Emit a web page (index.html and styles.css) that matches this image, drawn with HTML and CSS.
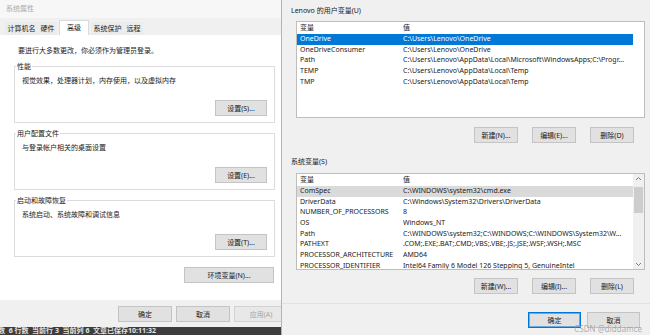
FILE: index.html
```html
<!DOCTYPE html>
<html lang="zh-CN">
<head>
    <meta charset="UTF-8">
    <meta name="viewport" content="width=device-width, initial-scale=1.0">
    <title>系统属性 - 环境变量</title>
    <link rel="stylesheet" href="styles.css">
</head>
<body>
    <div class="desk">
        <!-- System properties window -->
        <section class="sysprops">
            <div class="titlebar">系统属性</div>
            <div class="tabs">
                <span class="tab">计算机名</span>
                <span class="tab">硬件</span>
                <span class="tab active">高级</span>
                <span class="tab">系统保护</span>
                <span class="tab">远程</span>
            </div>
            <div class="panel">
                <p class="intro">要进行大多数更改，你必须作为管理员登录。</p>
                <div class="group">
                    <span class="group-title">性能</span>
                    <p class="group-text">视觉效果，处理器计划，内存使用，以及虚拟内存</p>
                    <div class="group-actions"><button class="btn">设置(S)...</button></div>
                </div>
                <div class="group">
                    <span class="group-title">用户配置文件</span>
                    <p class="group-text">与登录帐户相关的桌面设置</p>
                    <div class="group-actions"><button class="btn">设置(E)...</button></div>
                </div>
                <div class="group">
                    <span class="group-title">启动和故障恢复</span>
                    <p class="group-text">系统启动、系统故障和调试信息</p>
                    <div class="group-actions"><button class="btn">设置(T)...</button></div>
                </div>
                <div class="env-row"><button class="btn btn-wide">环境变量(N)...</button></div>
            </div>
            <div class="footer">
                <button class="btn">确定</button>
                <button class="btn">取消</button>
                <button class="btn" disabled>应用(A)</button>
            </div>
            <div class="statusbar">数&nbsp;&nbsp;6 行数&nbsp;&nbsp;当前行 3&nbsp;&nbsp;当前列 6&nbsp;&nbsp;文章已保存10:11:32</div>
        </section>

        <!-- Environment variables window -->
        <section class="envvars">
            <div class="section-label">Lenovo 的用户变量(U)</div>
            <div class="list">
                <div class="list-body" id="userVars"></div>
            </div>
            <div class="actions">
                <button class="btn">新建(N)...</button>
                <button class="btn">编辑(E)...</button>
                <button class="btn">删除(D)</button>
            </div>

            <div class="section-label sys">系统变量(S)</div>
            <div class="list sys">
                <div class="list-body" id="sysVars"></div>
                <div class="scrollbar">
                    <svg class="sb-arrow" width="7" height="8" viewBox="0 0 7 8"><polyline points="1,5 3.5,2.5 6,5" fill="none" stroke="#6d6d6d" stroke-width="0.9"/></svg>
                    <div class="sb-thumb"></div>
                    <svg class="sb-arrow down" width="7" height="8" viewBox="0 0 7 8"><polyline points="1,3 3.5,5.5 6,3" fill="none" stroke="#6d6d6d" stroke-width="0.9"/></svg>
                </div>
            </div>
            <div class="actions sys">
                <button class="btn">新建(W)...</button>
                <button class="btn">编辑(I)...</button>
                <button class="btn">删除(L)</button>
            </div>

            <div class="separator"></div>
            <div class="dialog-buttons">
                <button class="btn btn-dialog default">确定</button>
                <button class="btn btn-dialog">取消</button>
            </div>
            <div class="watermark">CSDN @diddamce</div>
        </section>
    </div>

    <script>
const userVars = [
    ["OneDrive", "C:\\Users\\Lenovo\\OneDrive"],
    ["OneDriveConsumer", "C:\\Users\\Lenovo\\OneDrive"],
    ["Path", "C:\\Users\\Lenovo\\AppData\\Local\\Microsoft\\WindowsApps;C:\\Progr..."],
    ["TEMP", "C:\\Users\\Lenovo\\AppData\\Local\\Temp"],
    ["TMP", "C:\\Users\\Lenovo\\AppData\\Local\\Temp"],
];

const sysVars = [
    ["ComSpec", "C:\\WINDOWS\\system32\\cmd.exe"],
    ["DriverData", "C:\\Windows\\System32\\Drivers\\DriverData"],
    ["NUMBER_OF_PROCESSORS", "8"],
    ["OS", "Windows_NT"],
    ["Path", "C:\\WINDOWS\\system32;C:\\WINDOWS;C:\\WINDOWS\\System32\\W..."],
    ["PATHEXT", ".COM;.EXE;.BAT;.CMD;.VBS;.VBE;.JS;.JSE;.WSF;.WSH;.MSC"],
    ["PROCESSOR_ARCHITECTURE", "AMD64"],
    ["PROCESSOR_IDENTIFIER", "Intel64 Family 6 Model 126 Stepping 5, GenuineIntel"],
];

function fillList(containerId, vars, markClass) {
    const container = document.getElementById(containerId);
    container.innerHTML = `<div class="row head"><span class="name">变量</span><span class="value">值</span></div>`;

    vars.forEach((item, index) => {
        const row = document.createElement("div");
        row.classList.add("row");
        if (index === 0) {
            row.classList.add(markClass);
        }
        row.innerHTML = `<span class="name">${item[0]}</span><span class="value">${item[1]}</span>`;
        container.appendChild(row);
    });
}

fillList("userVars", userVars, "selected");
fillList("sysVars", sysVars, "current");
    </script>
</body>
</html>
```

FILE: styles.css
```css
* {
    box-sizing: border-box;
}

html,
body {
    margin: 0;
    padding: 0;
}

body {
    width: 650px;
    height: 335px;
    overflow: hidden;
    font-family: "Noto Sans", "Noto Sans CJK SC", sans-serif;
    font-size: 7px;
    color: #1a1a1a;
    background-color: #f0f0f0;
}

p {
    margin: 0;
}

.desk {
    display: flex;
    height: 335px;
}

/* left window */

.sysprops {
    width: 282px;
    flex: none;
    display: flex;
    flex-direction: column;
    background-color: #fff;
    border-right: 1px solid #b4b4b4;
}

.titlebar {
    height: 18px;
    line-height: 17px;
    padding-left: 6px;
    color: #a9a9a9;
    background-color: #f7f7f7;
}

.tabs {
    height: 17px;
    display: flex;
    align-items: flex-end;
    padding-left: 5px;
    background-color: #f0f0f0;
}

.tab {
    height: 13px;
    line-height: 13px;
    padding: 0 2.5px;
    background-color: #ececec;
}

.tab.active {
    height: 15px;
    line-height: 14px;
    margin: 0 2px;
    padding: 0 7px;
    background-color: #fff;
    border: 1px solid #dadada;
    border-bottom: none;
}

.panel {
    flex: 1;
    padding: 11px 6px 0 14px;
    background-color: #fff;
}

.intro {
    margin: 0 0 10px 4px;
    line-height: 10px;
}

.group {
    border: 1px solid #dcdcdc;
    padding: 0 7px 6px;
    margin-bottom: 10px;
}

.group-title {
    display: block;
    width: fit-content;
    margin: -5px 0 0 -6px;
    padding: 0 1px;
    line-height: 10px;
    background-color: #fff;
}

.group-text {
    margin-top: 4px;
    line-height: 10px;
}

.group-actions {
    display: flex;
    justify-content: flex-end;
    margin-top: 14px;
}

.btn {
    width: 52px;
    height: 16px;
    flex: none;
    padding: 0;
    font: inherit;
    font-size: 7px;
    color: #1a1a1a;
    background-color: #e1e1e1;
    border: 1px solid #c4c4c4;
}

.btn:disabled {
    color: #a3a3a3;
    background-color: #e8e8e8;
    border-color: #d2d2d2;
}

.btn-wide {
    width: 90px;
}

.env-row {
    display: flex;
    justify-content: flex-end;
    padding-right: 1px;
}

.footer {
    height: 27px;
    display: flex;
    gap: 4px;
    padding: 6px 0 0 118px;
    overflow: hidden;
    background-color: #f0f0f0;
}

.footer .btn {
    width: 54px;
}

.statusbar {
    height: 8px;
    line-height: 8px;
    text-indent: -2px;
    white-space: nowrap;
    overflow: hidden;
    font-weight: bold;
    color: #e4e4e4;
    background-color: #3d3d3d;
}

/* right window */

.envvars {
    flex: 1;
    position: relative;
    padding: 6px 5px 0 9px;
    background-color: #f0f0f0;
}

.section-label {
    line-height: 10px;
}

.section-label.sys {
    margin-top: 14px;
}

.list {
    display: flex;
    height: 97px;
    margin: 5px 0 0 5px;
    overflow: hidden;
    background-color: #fff;
    border: 1px solid #bdbdbd;
}

.list.sys {
    margin-top: 6px;
}

.list-body {
    flex: 1;
    overflow: hidden;
}

.row {
    display: flex;
    width: 336px;
    height: 10.7px;
    line-height: 10.7px;
    white-space: nowrap;
}

.row.head {
    height: 12px;
    line-height: 12px;
}

.row .name {
    width: 106px;
    flex: none;
    padding-left: 3px;
    overflow: hidden;
}

.row .value {
    flex: 1;
    overflow: hidden;
}

.row.selected {
    color: #fff;
    background-color: #0078d7;
}

.row.current {
    background-color: #dadada;
}

.scrollbar {
    width: 11px;
    display: flex;
    flex-direction: column;
    align-items: center;
    background-color: #f0f0f0;
}

.sb-arrow {
    display: block;
    margin-top: 1px;
}

.sb-thumb {
    width: 9px;
    height: 26px;
    margin-top: 4px;
    background-color: #cdcdcd;
}

.sb-arrow.down {
    margin-top: auto;
    margin-bottom: 1px;
}

.actions {
    display: flex;
    justify-content: flex-end;
    gap: 14px;
    margin-top: 9px;
    padding-right: 11px;
}

.actions.sys {
    margin-top: 8px;
}

.actions .btn {
    width: 44px;
}

.separator {
    margin: 9px -5px 0 -9px;
    border-top: 1px solid #e2e2e2;
}

.dialog-buttons {
    display: flex;
    justify-content: flex-end;
    gap: 6px;
    margin-top: 8px;
    padding-right: 5px;
}

.btn-dialog {
    width: 53px;
}

.btn.default {
    border-color: #0078d7;
    box-shadow: inset 0 0 0 1px #6aa9e0;
}

.watermark {
    position: absolute;
    right: 8px;
    bottom: 2px;
    line-height: 9px;
    font-size: 8px;
    color: rgba(150, 150, 150, 0.75);
}
```
